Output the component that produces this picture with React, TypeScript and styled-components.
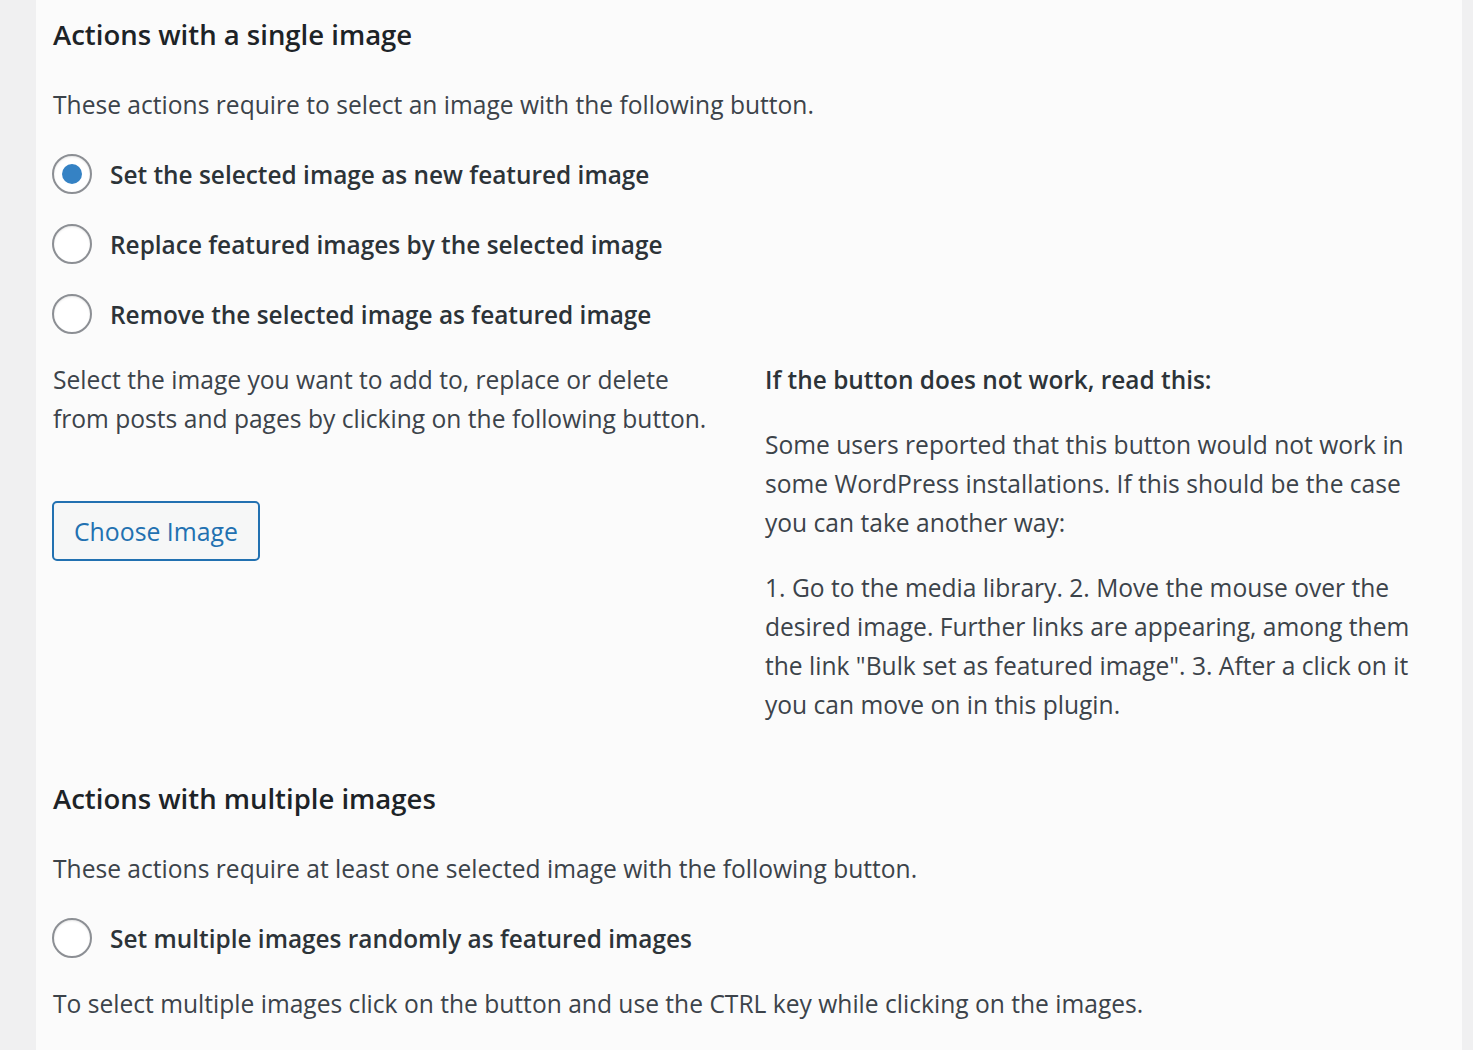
import React, { useState } from "react";
import styled, { createGlobalStyle } from "styled-components";

const colors = {
  page: "#f0f0f1",
  panel: "#fbfbfb",
  heading: "#1d2327",
  text: "#3c434a",
  label: "#2c3338",
  border: "#8c8f94",
  blue: "#2271b1",
  dot: "#3582c4",
};

const GlobalStyle = createGlobalStyle`
  html, body {
    margin: 0;
    padding: 0;
    background: ${colors.page};
  }
  body {
    font-family: "Open Sans", "Noto Sans", "Liberation Sans", sans-serif;
    color: ${colors.text};
  }
`;

const singleActions = [
  { id: "set", label: "Set the selected image as new featured image" },
  { id: "replace", label: "Replace featured images by the selected image" },
  { id: "remove", label: "Remove the selected image as featured image" },
];

export default function App() {
  const [single, setSingle] = useState("set");
  const [multiple, setMultiple] = useState("");

  return (
    <>
      <GlobalStyle />
      <StyledPage>
        <StyledPanel>
          <StyledSection>
            <StyledHeading>Actions with a single image</StyledHeading>
            <StyledText>
              These actions require to select an image with the following
              button.
            </StyledText>
            <StyledRadioList>
              {singleActions.map((action) => (
                <StyledRadioRow key={action.id}>
                  <StyledRadio
                    type="radio"
                    name="single"
                    checked={single === action.id}
                    onChange={() => setSingle(action.id)}
                  />
                  {action.label}
                </StyledRadioRow>
              ))}
            </StyledRadioList>

            <StyledColumns>
              <StyledLeft>
                <StyledText>
                  Select the image you want to add to, replace or delete from
                  posts and pages by clicking on the following button.
                </StyledText>
                <StyledButton type="button">Choose Image</StyledButton>
              </StyledLeft>
              <StyledRight>
                <StyledStrong>If the button does not work, read this:</StyledStrong>
                <StyledText>
                  Some users reported that this button would not work in some
                  WordPress installations. If this should be the case you can
                  take another way:
                </StyledText>
                <StyledText>
                  1. Go to the media library. 2. Move the mouse over the
                  desired image. Further links are appearing, among them the
                  link "Bulk set as featured image". 3. After a click on it you
                  can move on in this plugin.
                </StyledText>
              </StyledRight>
            </StyledColumns>
          </StyledSection>

          <StyledSection>
            <StyledHeading>Actions with multiple images</StyledHeading>
            <StyledText>
              These actions require at least one selected image with the
              following button.
            </StyledText>
            <StyledRadioList>
              <StyledRadioRow>
                <StyledRadio
                  type="radio"
                  name="multiple"
                  checked={multiple === "random"}
                  onChange={() => setMultiple("random")}
                />
                Set multiple images randomly as featured images
              </StyledRadioRow>
            </StyledRadioList>
            <StyledText>
              To select multiple images click on the button and use the CTRL
              key while clicking on the images.
            </StyledText>
          </StyledSection>
        </StyledPanel>
      </StyledPage>
    </>
  );
}

const StyledPage = styled.div`
  min-height: 1050px;
  padding: 0 11px 0 36px;
  display: flex;
`;

const StyledPanel = styled.main`
  flex: 1;
  min-width: 0;
  background: ${colors.panel};
  padding: 18px 17px 40px 17px;
  display: flex;
  flex-direction: column;
  gap: 58px;
`;

const StyledSection = styled.section`
  display: flex;
  flex-direction: column;
`;

const StyledHeading = styled.h2`
  margin: 0 0 33px;
  font-size: 27.5px;
  line-height: 34px;
  font-weight: 600;
  color: ${colors.heading};
`;

const StyledText = styled.p`
  margin: 0;
  font-size: 24.6px;
  line-height: 39px;
  color: ${colors.text};

  & + & {
    margin-top: 26px;
  }
`;

const StyledRadioList = styled.div`
  display: flex;
  flex-direction: column;
  gap: 30px;
  margin: 30px 0 26px;
`;

const StyledRadioRow = styled.label`
  display: flex;
  align-items: center;
  gap: 18px;
  height: 40px;
  margin-left: -1px;
  font-size: 24.4px;
  font-weight: 600;
  color: ${colors.label};
  cursor: pointer;
`;

const StyledRadio = styled.input`
  appearance: none;
  margin: 0;
  width: 40px;
  height: 40px;
  flex: none;
  border: 2px solid ${colors.border};
  border-radius: 50%;
  background: #fff;
  box-shadow: inset 0 1px 2px rgba(0, 0, 0, 0.1);
  display: grid;
  place-items: center;
  cursor: pointer;

  &::before {
    content: "";
    width: 20px;
    height: 20px;
    border-radius: 50%;
    background: ${colors.dot};
    transform: scale(0);
  }

  &:checked::before {
    transform: scale(1);
  }
`;

const StyledColumns = styled.div`
  display: grid;
  grid-template-columns: 670px 675px;
  column-gap: 42px;
  align-items: start;
`;

const StyledLeft = styled.div`
  display: flex;
  flex-direction: column;
  align-items: flex-start;
  gap: 63px;
`;

const StyledRight = styled.div`
  display: flex;
  flex-direction: column;
`;

const StyledStrong = styled.p`
  margin: 0 0 26px;
  font-size: 24.4px;
  line-height: 39px;
  font-weight: 600;
  color: ${colors.label};
`;

const StyledButton = styled.button`
  height: 60px;
  margin-left: -1px;
  padding: 0 20px;
  border: 2px solid ${colors.blue};
  border-radius: 5px;
  background: #f6f7f7;
  color: ${colors.blue};
  font-family: inherit;
  font-size: 24.8px;
  cursor: pointer;
`;
